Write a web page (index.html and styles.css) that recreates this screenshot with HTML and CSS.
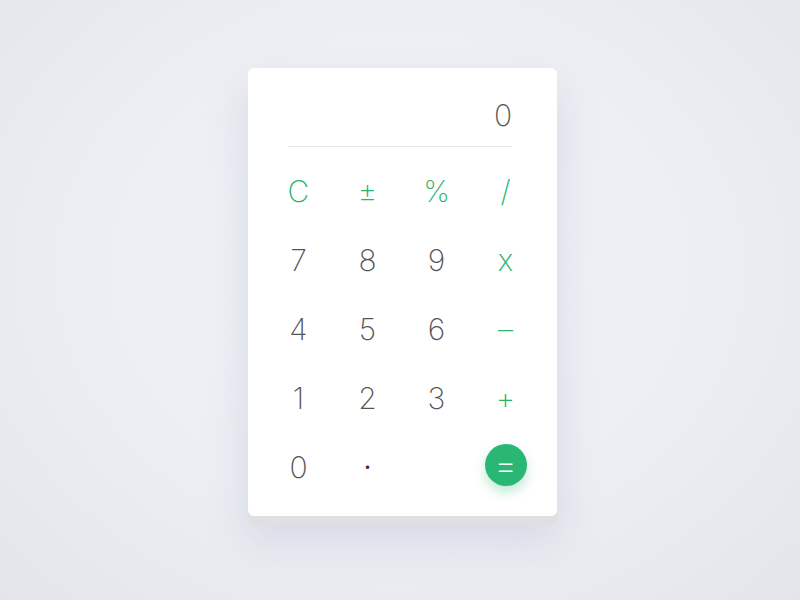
FILE: index.html
```html
<!DOCTYPE html>
<html>
<head>
<meta charset="utf-8">
<link rel="stylesheet" href="styles.css">
</head>
<body>
<div class="stage">
  <div class="calc">
    <div class="display">0</div>
    <div class="keys">
      <div class="key op">C</div>
      <div class="key op">±</div>
      <div class="key op">%</div>
      <div class="key op">/</div>
      <div class="key">7</div>
      <div class="key">8</div>
      <div class="key">9</div>
      <div class="key op">x</div>
      <div class="key">4</div>
      <div class="key">5</div>
      <div class="key">6</div>
      <div class="key op">–</div>
      <div class="key">1</div>
      <div class="key">2</div>
      <div class="key">3</div>
      <div class="key op">+</div>
      <div class="key">0</div>
      <div class="key dot">·</div>
      <div class="key"></div>
      <div class="key"><span class="equals">=</span></div>
    </div>
  </div>
</div>
</body>
</html>
```
FILE: styles.css
```css
html, body {
  margin: 0;
  padding: 0;
}
body {
  width: 800px;
  height: 600px;
  overflow: hidden;
  background: radial-gradient(ellipse at 50% 45%, #f2f3f7 0%, #eceef3 55%, #e4e5ea 100%);
  font-family: "Inter", "Helvetica Neue", "Liberation Sans", sans-serif;
  font-weight: 200;
}
.stage {
  padding-top: 68px;
  padding-left: 248px;
}
.calc {
  width: 309px;
  height: 448px;
  box-sizing: border-box;
  background: #ffffff;
  border-radius: 6px;
  box-shadow: 0 9px 0 #e0e0e2, 0 22px 40px rgba(160, 162, 200, 0.3);
  padding: 30px 45px 0 40px;
}
.display {
  font-size: 30px;
  line-height: 34px;
  color: #555555;
  text-align: right;
  padding-bottom: 14px;
  border-bottom: 1px solid #e8e8e8;
}
.keys {
  display: grid;
  grid-template-columns: repeat(4, 69px);
  grid-auto-rows: 69px;
  margin-left: -24px;
  margin-top: 9px;
}
.key {
  display: flex;
  align-items: center;
  justify-content: center;
  font-size: 30px;
  color: #555555;
}
.key.op {
  color: #27b36c;
}
.key.dot {
  color: #333333;
  font-weight: 400;
  font-size: 26px;
}
.equals {
  display: flex;
  align-items: center;
  justify-content: center;
  width: 42px;
  height: 42px;
  border-radius: 50%;
  background: #2ab673;
  color: #ffffff;
  font-size: 36px;
  line-height: 42px;
  box-shadow: 0 6px 12px rgba(42, 182, 115, 0.3);
  margin-top: -4px;
}
```
